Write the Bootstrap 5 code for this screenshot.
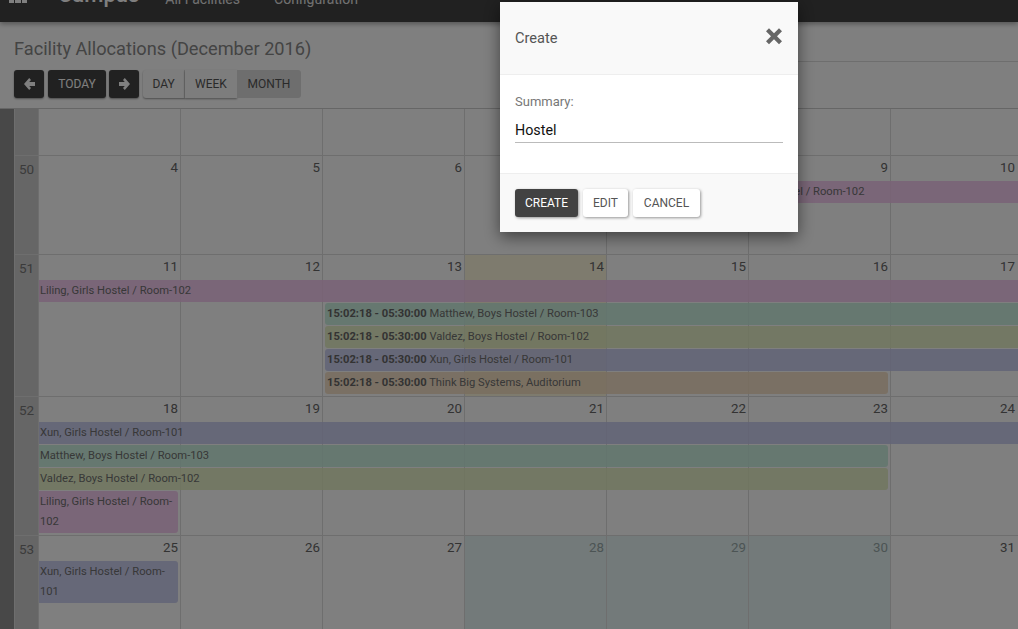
<!DOCTYPE html>
<html lang="en">
<head>
<meta charset="utf-8">
<title>Facility Allocations</title>
<link rel="stylesheet" href="https://cdn.jsdelivr.net/npm/bootstrap@5.3.0/dist/css/bootstrap.min.css">
<style>
html,body{height:100%;overflow:hidden}
body{font-family:Roboto,"Liberation Sans",sans-serif;background:#fff;color:#666;font-size:14px}
.page-wrap{height:629px;overflow:hidden}
.top-bar{height:22px;background:#424242;box-shadow:0 2px 5px rgba(0,0,0,.35);overflow:hidden;position:relative;align-items:flex-end;padding-left:9px}
.app-grid{width:18px;height:3px;margin-bottom:19px;margin-right:31px;gap:1px}
.app-grid span{flex:1;height:8px;margin-top:-5px;background:#fff;display:block}
.top-brand{font-size:22px;font-weight:500;color:#fff;line-height:28px;margin-bottom:13px;margin-right:26px}
.top-link{font-size:14px;color:#fff;line-height:16px;margin-bottom:15px;margin-right:34px;opacity:.85}
.title-row{height:40px;padding-left:14px}
.page-title{font-size:18.2px;font-weight:400;color:#888;line-height:22px;margin:16px 0 0}
.title-rule{width:260px;height:40px;border-bottom:1px solid #ddd}
.tool-row{padding:8px 0 0 14px;height:46px;gap:3px}
.tb{height:28px;font-size:12px;line-height:28px;padding:0;border:0;border-radius:3px;text-transform:uppercase;box-shadow:0 1px 2px rgba(0,0,0,.4);display:flex;align-items:center;justify-content:center}
.tb-dark{background:#424242;color:#fff}
.tb-arrow{width:30px}
.tb-today{width:58px;margin-left:1px}
.tb-next{margin-right:1px}
.seg{display:flex}
.tb-light{background:#fafafa;color:#555;border-radius:0}
.tb-day{width:42px;border-radius:3px 0 0 3px;border-right:1px solid #ddd}
.tb-week{width:52px;border-radius:0}
.tb-month{width:64px;background:#dcdcdc;border-radius:0 3px 3px 0;box-shadow:none}
.cal{border-top:1px solid #ccc;display:flex}
.cal-side{width:14px;background:#919191;flex:none}
.cal-body{flex:1;min-width:0}
.wk{display:grid;border-bottom:1px solid #ddd}
.wk>*{grid-area:1/1}
.wk-bg,.wk-fg{display:grid;grid-template-columns:25px repeat(6,142px) 127px}
.wk-h0{height:47px}.wk-h1{height:99px}.wk-h3{height:120px}
.wn{background:#ccc;border-left:1px solid #ddd;border-right:1px solid #ddd;text-align:center;color:#777;padding-top:3px;line-height:20px;font-size:13.5px}
.dc{border-right:1px solid #ddd}
.dc:last-child{border-right:0}
.dc-today{background:#fcf7dc}
.dc-sel{background:#e6f5f5}
.wk-fg{grid-auto-rows:min-content;padding-bottom:1px}
.dn{height:25px;text-align:right;padding-right:3px;line-height:24px;color:#666;font-size:13.3px}
.dn-sel{color:#98a8a8}
.c2{grid-column:2}.c3{grid-column:3}.c4{grid-column:4}.c5{grid-column:5}.c6{grid-column:6}.c7{grid-column:7}.c8{grid-column:8}
.ev{font-size:11.2px;line-height:20px;padding:1px 1px;margin-bottom:1px;color:#707070;white-space:nowrap;overflow:hidden}
.ev b{font-weight:700;color:#666}
.ev-wrap{white-space:normal}
.ev-st{margin-left:2px;padding-left:2px;border-radius:3px 0 0 3px}
.ev-en{margin-right:3px;border-radius:0 3px 3px 0}
.ev-st.ev-en{border-radius:3px}
.sp-2-8{grid-column:2/8}
.sp-2-9{grid-column:2/9}
.sp-2-2{grid-column:2}
.sp-4-8{grid-column:4/8}
.sp-4-9{grid-column:4/9}
.sp-6-9{grid-column:6/9}
.ev-pink{background:rgba(243,196,237,.85)}
.ev-green{background:rgba(196,237,220,.85)}
.ev-olive{background:rgba(226,237,190,.85)}
.ev-blue{background:rgba(196,200,237,.85)}
.ev-orange{background:rgba(243,220,190,.85)}
.modal-dialog.create-dlg{width:298px;max-width:298px;margin:2px 0 0 500px}
.create-dlg .modal-content{border:0;border-radius:0;box-shadow:0 5px 15px rgba(0,0,0,.5);background:#f9f9f9;color:#444}
.create-dlg .modal-header{height:73px;padding:0 15px 1px;border-bottom:1px solid #eee;background:#f9f9f9;border-radius:0}
.dlg-title{font-size:14.6px;font-weight:400;color:#555;margin:2px 0 0}
.dlg-close{background:none;border:0;padding:0;width:18px;height:18px;margin:0 0 7px 0;display:block}
.create-dlg .modal-body{height:98px;padding:19px 15px 0;background:#fff}
.dlg-label{font-size:13px;color:#777;line-height:16px;margin:0;display:block}
.dlg-input{display:block;width:100%;border:0;border-bottom:1px solid #bbb;background:transparent;padding:0;height:25px;margin-top:8px;font:14.3px/24px Roboto,sans-serif;color:#111;outline:0;border-radius:0}
.create-dlg .modal-footer{height:59px;padding:0 15px 0;justify-content:flex-start;gap:5px;border-top:1px solid #eee;background:#f9f9f9;border-radius:0;align-items:flex-start}
.create-dlg .modal-footer>*{margin:15px 0 0}
.dlg-btn{height:28px;font-size:12px;line-height:28px;padding:0;border:0;border-radius:3px;text-transform:uppercase;box-shadow:1px 1px 3px rgba(0,0,0,.4);background:#fff;color:#555}
.dlg-create{width:63px;background:#424242;color:#fff}
.dlg-edit{width:45px}
.dlg-cancel{width:67px}
</style>
</head>
<body>
<div class="page-wrap">
  <nav class="top-bar d-flex">
    <div class="app-grid d-flex"><span></span><span></span><span></span></div>
    <div class="top-brand">Campus</div>
    <div class="top-link">All Facilities</div>
    <div class="top-link">Configuration</div>
  </nav>
  <div class="title-row d-flex justify-content-between">
    <h1 class="page-title">Facility Allocations (December 2016)</h1>
    <div class="title-rule"></div>
  </div>
  <div class="tool-row d-flex">
    <button class="tb tb-dark tb-arrow" type="button" aria-label="Previous"><svg width="11" height="12" viewBox="0 0 11 12"><path fill="#fff" d="M5.2 0 7 1.9 5.2 3.9H11V8.1H5.2L7 10.1 5.2 12 0 6z"/></svg></button>
    <button class="tb tb-dark tb-today" type="button">Today</button>
    <button class="tb tb-dark tb-arrow tb-next" type="button" aria-label="Next"><svg width="11" height="12" viewBox="0 0 11 12"><path fill="#fff" d="M5.8 0 4 1.9 5.8 3.9H0V8.1H5.8L4 10.1 5.8 12 11 6z"/></svg></button>
    <div class="seg">
      <button class="tb tb-light tb-day" type="button">Day</button>
      <button class="tb tb-light tb-week" type="button">Week</button>
      <button class="tb tb-light tb-month" type="button">Month</button>
    </div>
  </div>
  <div class="cal">
    <div class="cal-side"></div>
    <div class="cal-body">
      <div class="wk wk-h0">
        <div class="wk-bg"><div class="wn"></div><div class="dc"></div><div class="dc"></div><div class="dc"></div><div class="dc"></div><div class="dc"></div><div class="dc"></div><div class="dc"></div></div>
      </div>
      <div class="wk wk-h1">
        <div class="wk-bg"><div class="wn">50</div><div class="dc"></div><div class="dc"></div><div class="dc"></div><div class="dc"></div><div class="dc"></div><div class="dc"></div><div class="dc"></div></div>
        <div class="wk-fg">
          <div class="dn c2">4</div><div class="dn c3">5</div><div class="dn c4">6</div><div class="dn c5">7</div><div class="dn c6">8</div><div class="dn c7">9</div><div class="dn c8">10</div>
          <div class="ev ev-pink ev-st sp-6-9"><b>15:02:18 - 05:30:00</b> Liling, Girls Hostel / Room-102</div>
        </div>
      </div>
      <div class="wk">
        <div class="wk-bg"><div class="wn">51</div><div class="dc"></div><div class="dc"></div><div class="dc"></div><div class="dc dc-today"></div><div class="dc"></div><div class="dc"></div><div class="dc"></div></div>
        <div class="wk-fg">
          <div class="dn c2">11</div><div class="dn c3">12</div><div class="dn c4">13</div><div class="dn c5">14</div><div class="dn c6">15</div><div class="dn c7">16</div><div class="dn c8">17</div>
          <div class="ev ev-pink sp-2-9">Liling, Girls Hostel / Room-102</div>
          <div class="ev ev-green ev-st sp-4-9"><b>15:02:18 - 05:30:00</b> Matthew, Boys Hostel / Room-103</div>
          <div class="ev ev-olive ev-st sp-4-9"><b>15:02:18 - 05:30:00</b> Valdez, Boys Hostel / Room-102</div>
          <div class="ev ev-blue ev-st sp-4-9"><b>15:02:18 - 05:30:00</b> Xun, Girls Hostel / Room-101</div>
          <div class="ev ev-orange ev-st ev-en sp-4-8"><b>15:02:18 - 05:30:00</b> Think Big Systems, Auditorium</div>
        </div>
      </div>
      <div class="wk">
        <div class="wk-bg"><div class="wn">52</div><div class="dc"></div><div class="dc"></div><div class="dc"></div><div class="dc"></div><div class="dc"></div><div class="dc"></div><div class="dc"></div></div>
        <div class="wk-fg">
          <div class="dn c2">18</div><div class="dn c3">19</div><div class="dn c4">20</div><div class="dn c5">21</div><div class="dn c6">22</div><div class="dn c7">23</div><div class="dn c8">24</div>
          <div class="ev ev-blue sp-2-9">Xun, Girls Hostel / Room-101</div>
          <div class="ev ev-green ev-en sp-2-8">Matthew, Boys Hostel / Room-103</div>
          <div class="ev ev-olive ev-en sp-2-8">Valdez, Boys Hostel / Room-102</div>
          <div class="ev ev-pink ev-en ev-wrap sp-2-2">Liling, Girls Hostel / Room-102</div>
        </div>
      </div>
      <div class="wk wk-h3">
        <div class="wk-bg"><div class="wn">53</div><div class="dc"></div><div class="dc"></div><div class="dc"></div><div class="dc dc-sel"></div><div class="dc dc-sel"></div><div class="dc dc-sel"></div><div class="dc"></div></div>
        <div class="wk-fg">
          <div class="dn c2">25</div><div class="dn c3">26</div><div class="dn c4">27</div><div class="dn dn-sel c5">28</div><div class="dn dn-sel c6">29</div><div class="dn dn-sel c7">30</div><div class="dn c8">31</div>
          <div class="ev ev-blue ev-en ev-wrap sp-2-2">Xun, Girls Hostel / Room-101</div>
        </div>
      </div>
    </div>
  </div>
</div>
<div class="modal-backdrop show"></div>
<div class="modal d-block" tabindex="-1" role="dialog">
  <div class="modal-dialog create-dlg">
    <div class="modal-content">
      <div class="modal-header d-flex justify-content-between align-items-center">
        <h5 class="dlg-title">Create</h5>
        <button class="dlg-close" type="button" aria-label="Close"><svg width="18" height="18" viewBox="0 0 18 18"><path fill="#666" d="M4 1.3 9 6.3 14 1.3 17 4.3 12 9.3 17 14.3 14 17.3 9 12.3 4 17.3 1 14.3 6 9.3 1 4.3z"/></svg></button>
      </div>
      <div class="modal-body">
        <label class="dlg-label" for="summary">Summary:</label>
        <input class="dlg-input" id="summary" type="text" value="Hostel">
      </div>
      <div class="modal-footer">
        <button class="dlg-btn dlg-create" type="button">Create</button>
        <button class="dlg-btn dlg-edit" type="button">Edit</button>
        <button class="dlg-btn dlg-cancel" type="button">Cancel</button>
      </div>
    </div>
  </div>
</div>
<script src="https://cdn.jsdelivr.net/npm/bootstrap@5.3.0/dist/js/bootstrap.bundle.min.js"></script>
</body>
</html>
